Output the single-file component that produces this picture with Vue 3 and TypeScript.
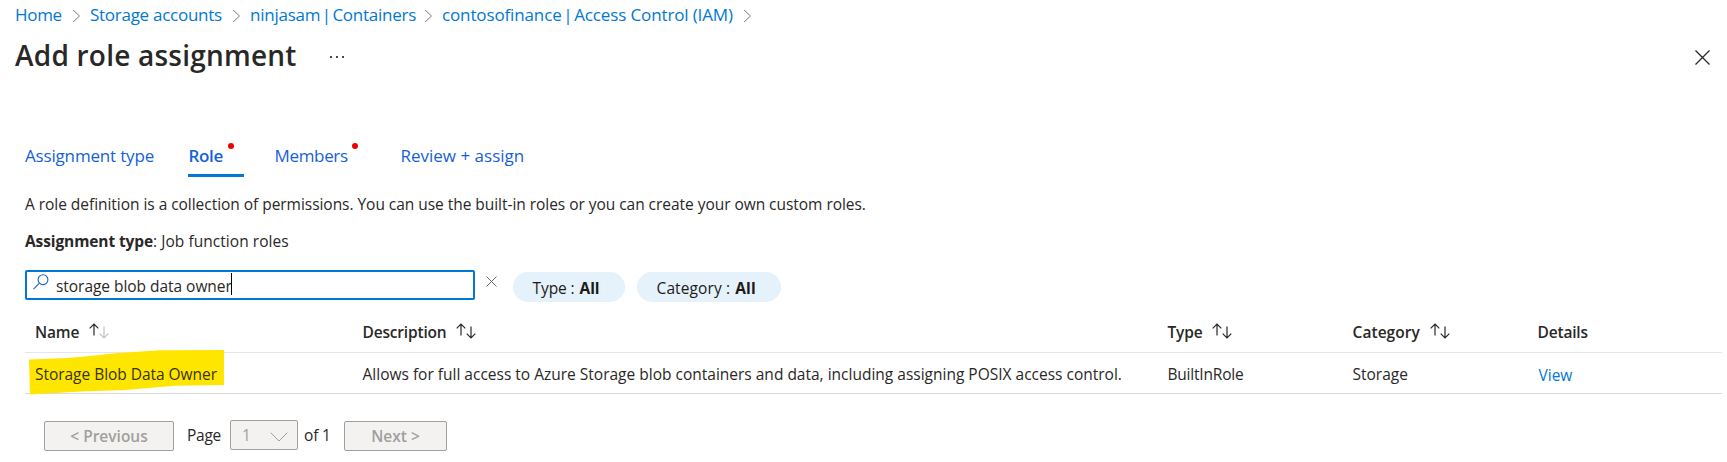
<script setup lang="ts">
interface Crumb { parts: string[]; cls: string }
interface Tab { label: string; cls: string; flagged?: boolean; active?: boolean }
interface Column { label: string; cls: string; sort?: 'asc' | 'both' }

const crumbs: Crumb[] = [
  { parts: ['Home'], cls: 'crumb-home' },
  { parts: ['Storage accounts'], cls: 'crumb-accounts' },
  { parts: ['ninjasam', 'Containers'], cls: 'crumb-containers' },
  { parts: ['contosofinance', 'Access Control (IAM)'], cls: 'crumb-iam' },
]
const tabs: Tab[] = [
  { label: 'Assignment type', cls: 'tab-type' },
  { label: 'Role', cls: 'tab-role', flagged: true, active: true },
  { label: 'Members', cls: 'tab-members', flagged: true },
  { label: 'Review + assign', cls: 'tab-review' },
]
const columns: Column[] = [
  { label: 'Name', cls: 'col-name', sort: 'asc' },
  { label: 'Description', cls: 'col-description', sort: 'both' },
  { label: 'Type', cls: 'col-type', sort: 'both' },
  { label: 'Category', cls: 'col-category', sort: 'both' },
  { label: 'Details', cls: 'col-details' },
]
const filters = [
  { label: 'Type', value: 'All', cls: 'pill-type' },
  { label: 'Category', value: 'All', cls: 'pill-category' },
]
const role = {
  name: 'Storage Blob Data Owner',
  description:
    'Allows for full access to Azure Storage blob containers and data, including assigning POSIX access control.',
  type: 'BuiltInRole',
  category: 'Storage',
}
const query = 'storage blob data owner'
</script>

<template>
  <main class="blade">
    <nav class="breadcrumb">
      <template v-for="c in crumbs" :key="c.cls">
        <a class="crumb" :class="c.cls"><template v-for="(p, i) in c.parts" :key="p"><span v-if="i > 0" class="pipe">{{ ' | ' }}</span>{{ p }}</template></a>
        <svg class="crumb-sep" width="9" height="14" viewBox="0 0 9 14"><path d="M1 1l6.5 6L1 13" /></svg>
      </template>
    </nav>

    <header class="head">
      <h1>Add role assignment</h1>
      <svg class="more" width="14" height="2" viewBox="0 0 14 2">
        <rect x="0" y="0" width="2" height="2" /><rect x="6" y="0" width="2" height="2" /><rect x="12" y="0" width="2" height="2" />
      </svg>
      <svg class="close" width="15" height="15" viewBox="0 0 15 15"><path d="M.5 .5l14 14M14.5 .5l-14 14" /></svg>
    </header>

    <div class="tabs">
      <a v-for="t in tabs" :key="t.label" class="tab" :class="[t.cls, { active: t.active }]">
        {{ t.label }}<i v-if="t.flagged" class="flag"></i>
      </a>
    </div>

    <p class="intro">
      A role definition is a collection of permissions. You can use the built-in roles or you can create your own custom roles.
    </p>
    <p class="kind"><b>Assignment type</b>: Job function roles</p>

    <div class="filters">
      <div class="search">
        <svg class="lens" width="16" height="16" viewBox="0 0 16 16"><circle cx="10" cy="5.7" r="4.9" /><path d="M6.5 9.2L.5 15.2" /></svg>
        <span class="query">{{ query }}</span><i class="caret"></i>
      </div>
      <svg class="clear" width="11" height="11" viewBox="0 0 11 11"><path d="M.5 .5l10 10M10.5 .5l-10 10" /></svg>
      <span v-for="f in filters" :key="f.label" class="pill" :class="f.cls"><span>{{ f.label }} :</span><b>{{ f.value }}</b></span>
    </div>

    <section class="grid">
      <div class="row header-row">
        <div v-for="c in columns" :key="c.label" class="th" :class="c.cls">
          {{ c.label }}
          <svg v-if="c.sort" class="sort" width="20" height="16" viewBox="0 0 20 16">
            <path d="M5 12.5V1.2M.7 5.3L5 1l4.3 4.3" />
            <path :class="{ dim: c.sort === 'asc' }" d="M15 3.5v11.3M10.7 10.6L15 14.9l4.3-4.3" />
          </svg>
        </div>
      </div>
      <div class="row body-row">
        <div class="name">
          <svg class="marker" width="195" height="45" viewBox="0 0 195 45">
            <path d="M0 9.5L38 8l23-2 25-2.7L131 .3 195 0v35l-49 .7L96 40l-43 1.5L1 44.5z" />
          </svg>
          <span>{{ role.name }}</span>
        </div>
        <div>{{ role.description }}</div>
        <div class="cell-type">{{ role.type }}</div>
        <div>{{ role.category }}</div>
        <div><a class="view">View</a></div>
      </div>
    </section>

    <footer class="pager">
      <button class="prev" disabled>&lt; Previous</button>
      <span class="page-label">Page</span>
      <div class="page-select">
        <span>1</span>
        <svg width="18" height="10" viewBox="0 0 18 10"><path d="M.7 .7L9 9 17.3 .7" /></svg>
      </div>
      <span class="page-total">of 1</span>
      <button class="next" disabled>Next &gt;</button>
    </footer>
  </main>
</template>

<style>
body { margin: 0; background: #fff; }
</style>

<style scoped>
.blade {
  box-sizing: border-box;
  width: 1727px;
  height: 462px;
  overflow: hidden;
  background: #fff;
  color: #292827;
  font: 15.5px/24px "Segoe UI", "Open Sans", "Noto Sans", sans-serif;
}
svg { display: block; flex: none; fill: none; stroke: currentColor; }
h1, p { margin: 0; }
b { font-weight: 700; }

.breadcrumb { display: flex; align-items: center; height: 28px; padding-left: 15px; font-size: 17px; line-height: 28px; color: #0078d4; white-space: nowrap; }
.crumb { flex: none; padding-top: 1px; letter-spacing: -0.27px; }
.crumb-home { width: 57px; letter-spacing: -0.3px; }
.crumb-accounts { width: 142px; }
.crumb-containers { width: 174px; letter-spacing: -0.25px; }
.crumb-iam { width: 301px; letter-spacing: -0.13px; }
.pipe { margin: 0 -2.6px; white-space: pre; }
.crumb-sep { width: 9px; margin: 3px 9px 0 0; color: #7d7b79; }

.head { display: flex; height: 40px; margin-top: 7px; padding-left: 15px; line-height: 40px; }
h1 { width: 315px; font-size: 28px; font-weight: 600; line-height: 40px; letter-spacing: 0.22px; }
.more { margin-top: 21px; fill: #4a4846; stroke: none; }
.close { margin: 15px 17px 0 auto; color: #292827; stroke-width: 1.3; }

.tabs { display: flex; height: 34px; margin: 68px 0 0 25px; font-size: 17px; color: #155fda; }
.tab { position: relative; box-sizing: border-box; height: 34px; padding-top: 1px; white-space: nowrap; }
.tab-type { width: 163px; letter-spacing: -0.17px; }
.tab-role { width: 56px; margin-right: 30.5px; padding-left: 0.5px; letter-spacing: -0.35px; }
.tab-members { width: 126px; letter-spacing: -0.33px; }
.tab-review { letter-spacing: 0; }
.active { border-bottom: 3px solid #0078d4; font-weight: 600; }
.flag { position: absolute; top: 0; width: 6px; height: 6px; border-radius: 50%; background: #f00000; }
.tab-role .flag { left: 40px; }
.tab-members .flag { left: 77.5px; }

.intro { margin: 15px 0 0 25px; letter-spacing: -0.04px; }
.kind { margin: 13px 0 0 25px; letter-spacing: 0.05px; }
.kind b { letter-spacing: -0.107px; }

.filters { display: flex; height: 32px; margin: 17px 0 0 25px; }
.search { box-sizing: border-box; display: flex; width: 450px; height: 30px; padding-left: 6px; border: 2px solid #0078d4; border-radius: 2px; }
.lens { margin-top: 2px; color: #1668b8; stroke-width: 1.1; }
.query { margin: 2px 0 0 7px; letter-spacing: -0.04px; }
.caret { width: 1px; height: 22px; margin: 1px 0 0 -1px; background: #000; }
.clear { margin: 6px 16px 0 11px; color: #6a6866; }
.pill { box-sizing: border-box; height: 30px; margin-top: 2px; padding: 1px 0 0 19.5px; border-radius: 15px; background: #e5f1fb; color: #1b1a19; line-height: 30px; white-space: nowrap; }
.pill b { margin-left: 5px; }
.pill-type { width: 112px; margin-right: 12px; letter-spacing: -0.08px; }
.pill-category { width: 144px; letter-spacing: 0.12px; }

.grid { width: 1697px; margin: 17px 0 0 25px; }
.row { box-sizing: border-box; display: grid; grid-template-columns: 327.5px 805px 185px 185px 1fr; padding-left: 10px; white-space: nowrap; }
.header-row { height: 34px; border-bottom: 1px solid #e6e6e6; }
.th { display: flex; padding-top: 0.5px; font-weight: 600; letter-spacing: -0.18px; }
.th.col-category { letter-spacing: 0.06px; }
.sort { margin: 3.5px 0 0 10px; color: #292827; stroke-width: 1.2; }
.dim { stroke: #c4c2c0; }
.body-row { height: 41px; padding-top: 9px; border-bottom: 1px solid #dadada; }
.name { position: relative; letter-spacing: -0.036px; }
.name span { position: relative; color: #37330a; }
.marker { position: absolute; left: -6px; top: -12px; fill: #ffe600; stroke: none; }
.cell-type { letter-spacing: -0.2px; }
.view { display: inline-block; margin: 1px 0 0 1px; color: #0078d4; }

.pager { display: flex; height: 31px; margin: 26px 0 0 44px; }
.pager button, .page-select { box-sizing: border-box; height: 30px; border: 1px solid #a19f9d; border-radius: 2px; background: #f3f2f1; color: #a19f9d; }
.pager button { margin-top: 1px; padding: 0; font: inherit; font-weight: 600; line-height: 28px; }
.prev { width: 130px; }
.next { width: 103px; }
.page-label { width: 43px; margin: 3px 0 0 13px; letter-spacing: -0.26px; }
.page-select { display: flex; width: 68px; padding-left: 11px; line-height: 29px; }
.page-select svg { margin: 11px 0 0 19px; }
.page-total { width: 40px; margin: 3px 0 0 6px; letter-spacing: -0.15px; }
</style>
